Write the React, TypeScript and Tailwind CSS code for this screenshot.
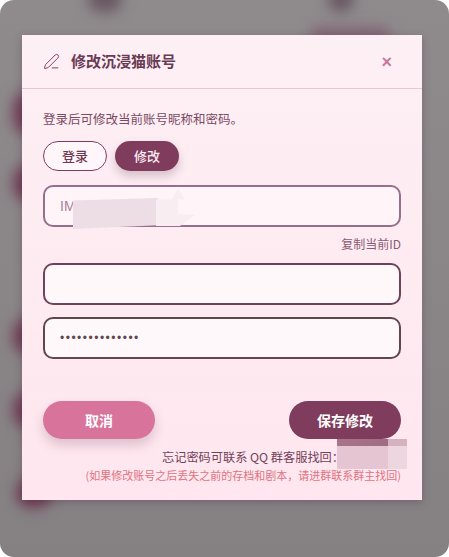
import { PenLine } from 'lucide-react'

const blobs = [
  'left-[88px] top-[-14px] w-[34px] h-[26px] bg-[#5f4a56]/80',
  'left-[328px] top-[-14px] w-[26px] h-[26px] bg-[#5f4a56]/80',
  'left-[13px] top-[92px] w-[30px] h-[42px] bg-[#6b2f4b]/85',
  'left-[13px] top-[165px] w-[30px] h-[36px] bg-[#6b2f4b]/85',
  'left-[13px] top-[318px] w-[30px] h-[36px] bg-[#6b2f4b]/85',
  'left-[13px] top-[392px] w-[30px] h-[36px] bg-[#6b2f4b]/85',
  'left-[16px] top-[478px] w-[36px] h-[30px] bg-[#6b2f4b]/85',
  'left-[310px] top-[28px] w-[80px] h-[14px] bg-[#7d5266]/80',
]

export default function App() {
  return (
    <div className="relative w-[449px] h-[557px] overflow-hidden bg-white font-['Noto_Sans_CJK_SC','Noto_Sans',sans-serif]">
      {/* dimmed page behind the dialog */}
      <div className="absolute inset-0 rounded-[14px] overflow-hidden bg-gradient-to-b from-[#8f8b8d] to-[#858183]">
        {blobs.map((b) => (
          <div key={b} className={`absolute rounded-full blur-[7px] ${b}`} />
        ))}
      </div>

      <div className="relative pt-[35px] pl-[22px]">
        <div className="w-[400px] h-[465px] flex flex-col bg-gradient-to-b from-[#fdf0f5] to-[#ffe6ef] shadow-[0_2px_8px_rgba(70,30,50,0.3)]">
          <div className="h-[54px] shrink-0 flex items-center justify-between pl-[21px] pr-[30px] border-b border-[#e8c6d6]">
            <div className="flex items-center gap-[11px]">
              <PenLine size={17} strokeWidth={1.4} className="text-[#8a3f62]" />
              <span className="text-[15px] font-bold text-[#6a3a53]">修改沉浸猫账号</span>
            </div>
            <span className="text-[18px] font-bold leading-none text-[#c77a9b] font-['Liberation_Sans',sans-serif]">×</span>
          </div>

          <div className="relative flex-1 px-[21px] pt-[20px]">
            <p className="text-[12.5px] leading-[20px] text-[#7a4a62]">登录后可修改当前账号昵称和密码。</p>

            <div className="mt-[12px] flex gap-[8px]">
              <button className="w-[64px] h-[30px] rounded-full border border-[#7f3c5c] bg-[#fff6f9] text-[13px] font-medium text-[#6f3852]">登录</button>
              <button className="w-[64px] h-[30px] rounded-full bg-[#7f3c5c] text-[13px] font-medium text-[#fdeef4] shadow-[0_5px_10px_rgba(90,50,70,0.25)]">修改</button>
            </div>

            <div className="relative mt-[14px] w-[358px] h-[42px] flex items-center pl-[15px] rounded-[10px] border-2 border-[#96708a] bg-[#fff4f8] text-[14px] text-[#a98299] font-['Liberation_Sans',sans-serif]">
              IM
              <div className="absolute left-[28px] top-[11px] w-[85px] h-[31px] bg-[#eddde4] [clip-path:polygon(0_8%,100%_0,100%_88%,0_100%)]" />
              <div className="absolute left-[111px] top-[1px] w-[40px] h-[38px] bg-[#f8eef2] [clip-path:polygon(0_30%,40%_30%,55%_0,72%_30%,55%_30%,55%_70%,100%_70%,60%_100%,0_100%)]" />
            </div>
            <div className="mt-[9px] w-[358px] text-right text-[12px] leading-[16px] text-[#8a5a74]">复制当前ID</div>

            <div className="mt-[11px] w-[358px] h-[42px] rounded-[10px] border-2 border-[#6e4359] bg-[#fff8fb]" />

            <div className="mt-[12px] w-[358px] h-[42px] flex items-center pl-[15px] rounded-[10px] border-2 border-[#5f474f] bg-[#fff8fb] text-[12px] tracking-[1.5px] text-[#5f474f] font-['Liberation_Sans',sans-serif]">
              ••••••••••••••
            </div>

            <div className="mt-[42px] w-[358px] flex justify-between">
              <button className="w-[112px] h-[38px] rounded-full bg-[#d8749b] text-[14px] font-bold text-white shadow-[0_6px_12px_rgba(90,50,70,0.22)]">取消</button>
              <button className="w-[112px] h-[38px] rounded-full bg-[#7f3c5c] text-[14px] font-bold text-white">保存修改</button>
            </div>

            <div className="mt-[9px] w-[358px] text-right pr-[57px] text-[12.2px] leading-[18px] text-[#71425a] whitespace-nowrap">忘记密码可联系 QQ 群客服找回：</div>
            <div className="w-[358px] text-right text-[11px] leading-[18px] whitespace-nowrap text-[#e0737f]">(如果修改账号之后丢失之前的存档和剧本，请进群联系群主找回)</div>

            {/* pixelated cover over the QQ number */}
            <div className="absolute left-[315px] top-[350px] flex h-[30px]">
              <div className="w-[51px] flex flex-col">
                <div className="h-[7px] bg-gradient-to-r from-[#a87489] to-[#a06c83]" />
                <div className="flex-1 bg-[#e6c5d2]" />
              </div>
              <div className="w-[19px] flex flex-col">
                <div className="h-[7px] bg-[#d6b2c1]" />
                <div className="flex-1 bg-[#edd6df]" />
              </div>
            </div>
          </div>
        </div>
      </div>
    </div>
  )
}
